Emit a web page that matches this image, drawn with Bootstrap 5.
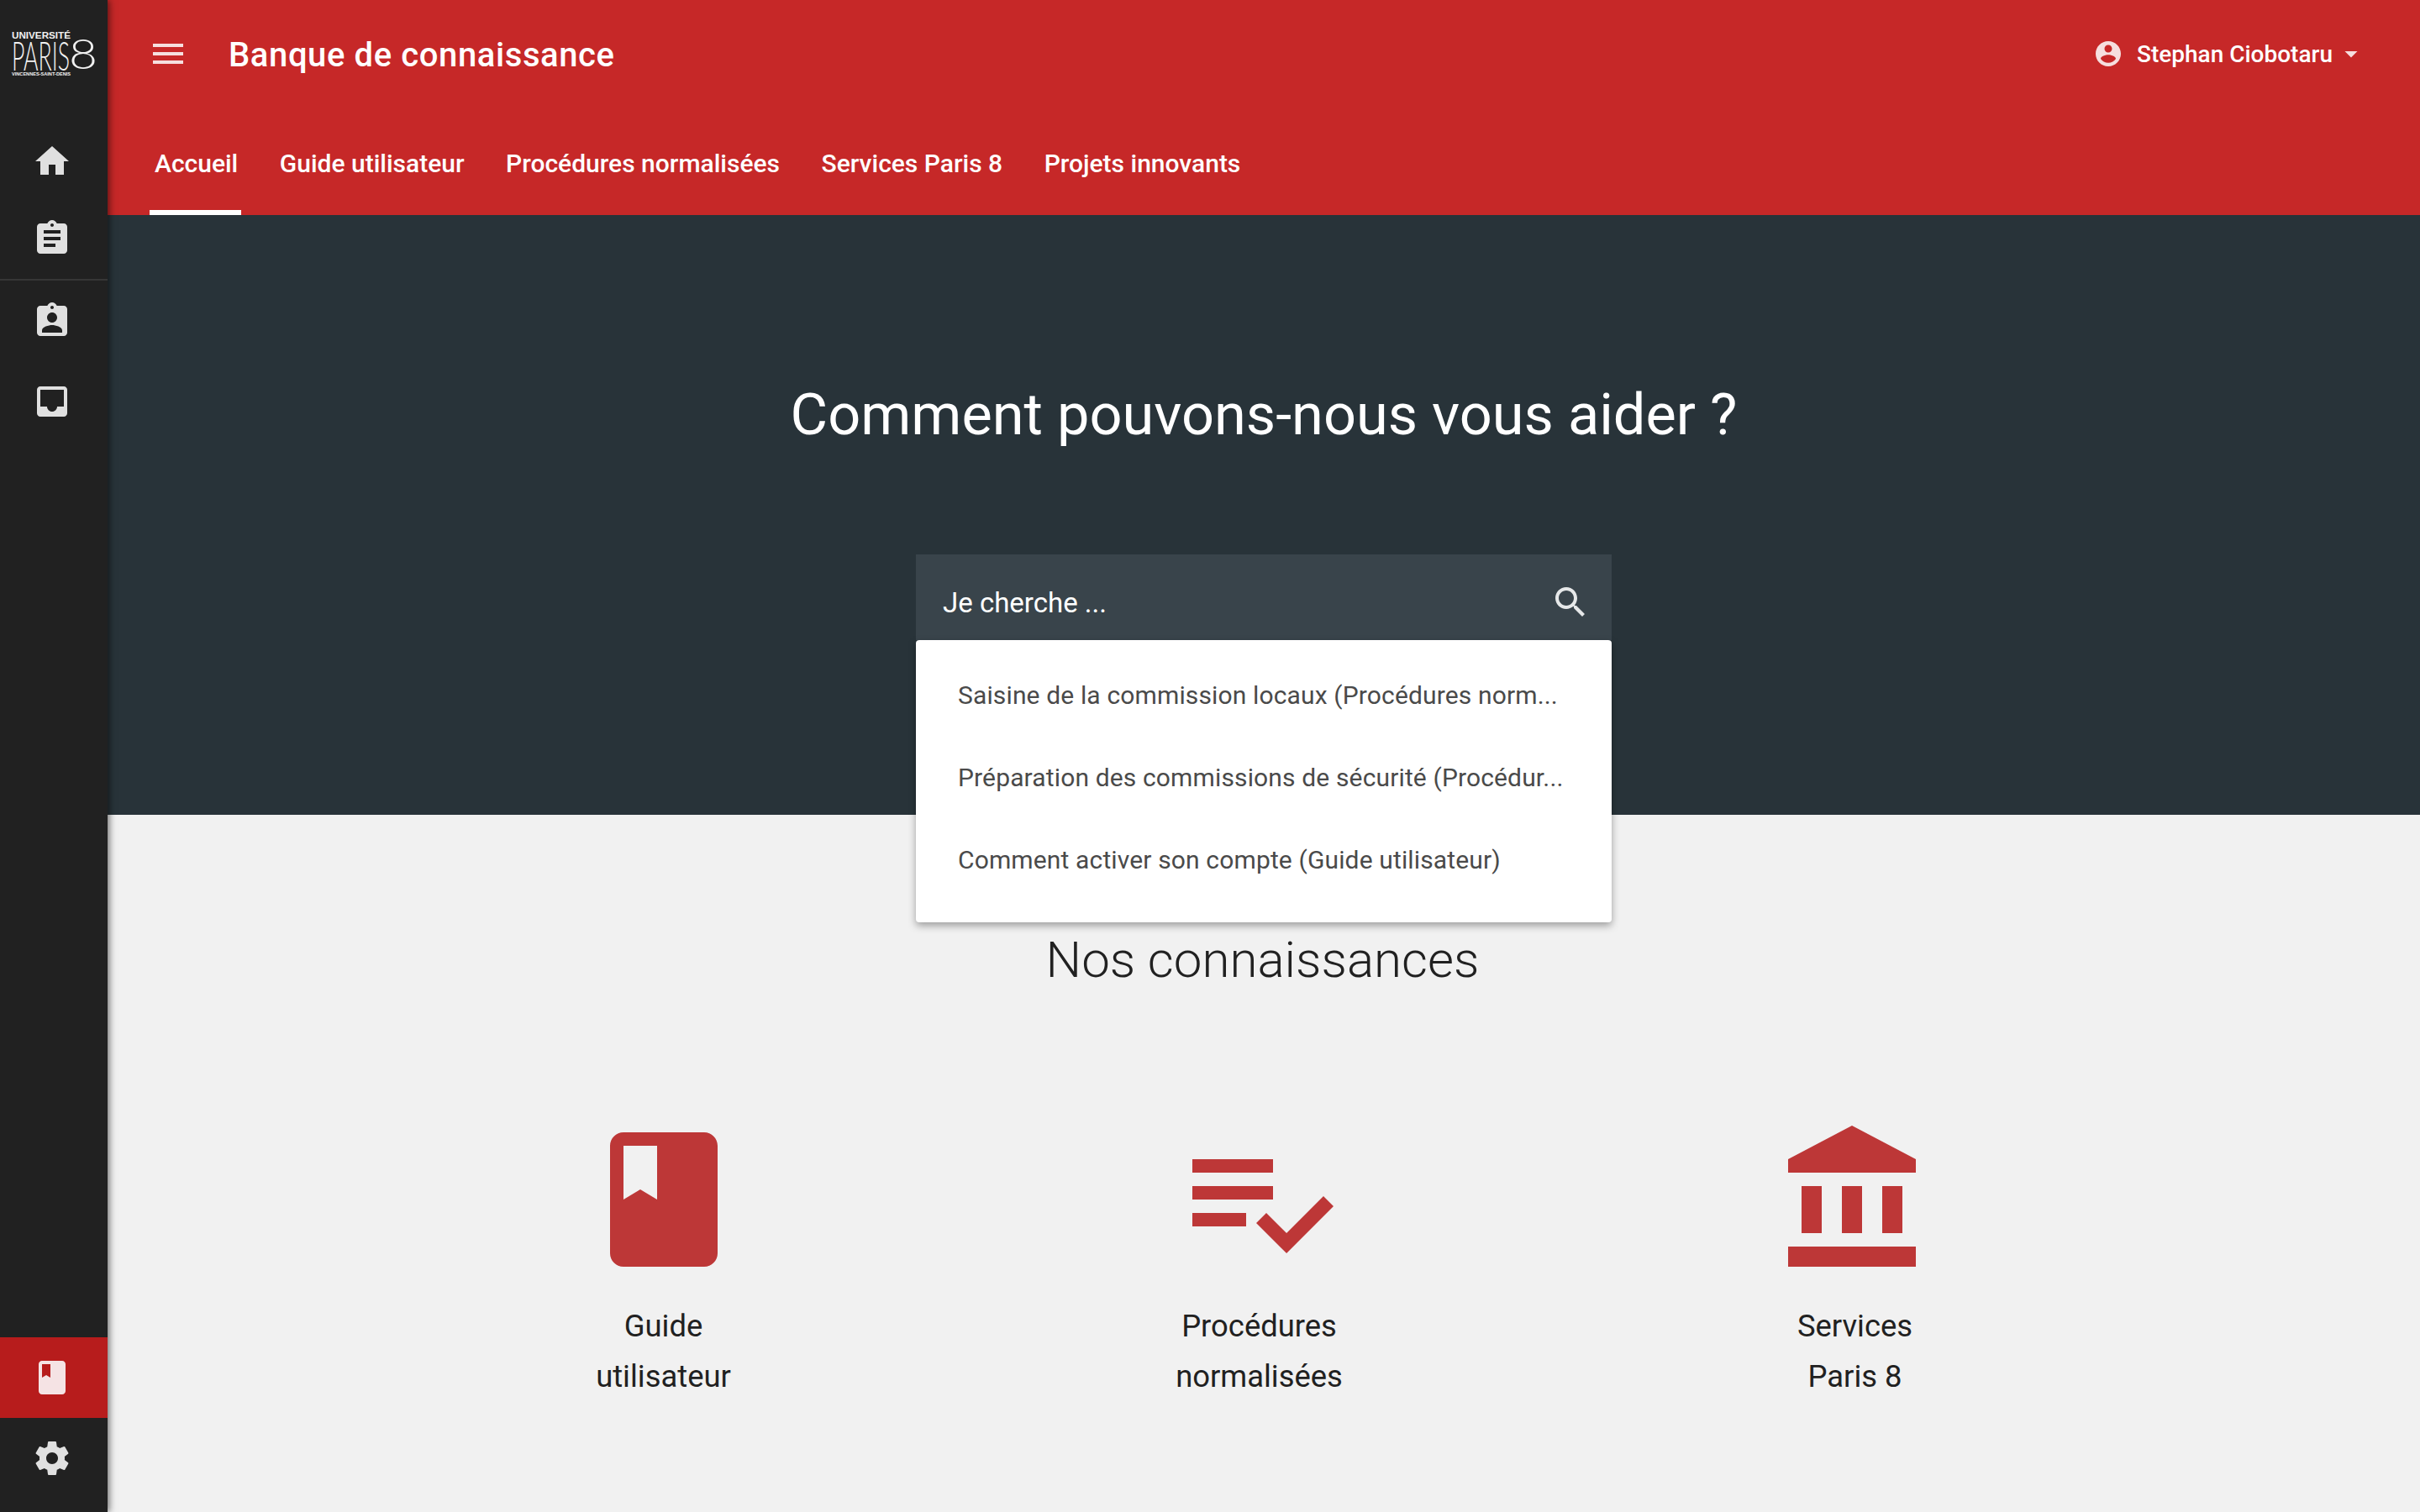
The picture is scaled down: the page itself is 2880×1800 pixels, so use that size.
<!DOCTYPE html>
<html lang="fr">
<head>
<meta charset="utf-8">
<title>Banque de connaissance</title>
<link href="https://cdn.jsdelivr.net/npm/bootstrap@5.3.0/dist/css/bootstrap.min.css" rel="stylesheet">
<style>
html,body{height:100%;}
body{background:#f1f1f1;font-family:Roboto,"Liberation Sans",sans-serif;overflow:hidden;}
.shell{height:1800px;}
.side{width:128px;background:#212121;box-shadow:2px 0 8px rgba(0,0,0,.55);z-index:5;flex:none;}
.logo-zone{height:146px;padding:36px 0 0 14px;}
.logo-zone svg{display:block;overflow:visible;}
.side-item{height:92px;display:flex;align-items:center;justify-content:center;width:124px;}
.side-item svg{width:48px;height:48px;fill:#e0e0e0;}
.side-rule{height:2px;background:#363636;margin:2px 0 2px;}
.side-low{height:96px;width:100%;padding-right:4px;}
.side-on{background:#b71c1c;}
.side-on svg{fill:#f5e3e4;}
.side-last{margin-bottom:16px;}
.main-col{min-width:0;}
.top{background:#c62828;height:256px;color:#fff;position:relative;z-index:3;}
.top-row{height:128px;padding:0 64px 0 48px;}
.burger{width:48px;height:48px;fill:#f6dfdf;display:block;}
.brand-text{font-size:40px;font-weight:500;margin-left:48px;line-height:1;letter-spacing:.6px;color:#fff;padding-top:4px;}
.who{font-size:28px;font-weight:500;color:#fff;}
.who span{padding-top:1px;}
.who svg{fill:#f6dfdf;}
.tabs{padding-left:50px;gap:39.5px;height:128px;}
.tabs .nav-link{color:#fff;font-size:30px;font-weight:500;padding:0 4px 0 6px;height:128px;line-height:134px;border-bottom:6px solid transparent;}
.tabs .nav-link.active{border-bottom-color:#fff;}
.hero{background:#283339;height:714px;padding-top:196px;color:#fff;}
.hero-title{font-size:68.5px;font-weight:400;line-height:84px;margin:0 0 124px;}
.search-wrap{width:828px;position:relative;}
.search-bar{height:102px;background:#39444b;padding:12px 25px 0 32px;color:#fff;font-size:33px;}
.search-bar span{padding-top:2px;}
.search-bar svg{width:48px;height:48px;fill:#e6e8e9;}
.sugg{position:absolute;left:0;right:0;top:102px;background:#fff;border-radius:4px;padding:16px 0;height:336px;box-shadow:0 4px 10px rgba(0,0,0,.35);z-index:4;}
.sugg-row{height:98px;padding:0 0 0 50px;color:#4a4a4a;font-size:30px;letter-spacing:.14px;display:flex;align-items:center;white-space:nowrap;}
.lower{padding-top:137px;}
.know-title{font-size:60px;font-weight:300;line-height:72px;color:#212121;margin:0 0 153px;padding-right:3px;}
.know-row{width:2127px;margin-left:307px;}
.know-cell{width:709px;}
.know-cell svg{width:192px;height:192px;fill:#bd3737;display:block;margin:0 auto 25px;}
.know-label{font-size:36.4px;line-height:60px;color:#212121;text-align:center;}
</style>
</head>
<body>
<div class="shell d-flex">
  <aside class="side d-flex flex-column">
    <div class="logo-zone">
      <svg width="102" height="56" viewBox="0 0 102 56" fill="#f2f2f2" aria-label="Université Paris 8">
        <text x="0" y="10" font-family="Liberation Sans" font-weight="700" font-size="11.5" textLength="70" lengthAdjust="spacingAndGlyphs">UNIVERSITÉ</text>
        <text x="0" y="48" font-family="Lato" font-weight="300" font-size="47" textLength="69" lengthAdjust="spacingAndGlyphs">PARIS</text>
        <text x="68" y="46" font-family="Lato" font-weight="300" font-size="49" textLength="34" lengthAdjust="spacingAndGlyphs">8</text>
        <text x="0" y="54" font-family="Liberation Sans" font-weight="700" font-size="5" textLength="70" lengthAdjust="spacingAndGlyphs">VINCENNES-SAINT-DENIS</text>
      </svg>
    </div>
    <div class="side-item"><svg viewBox="0 0 24 24"><path d="M10 20v-6h4v6h5v-8h3L12 3 2 12h3v8z"/></svg></div>
    <div class="side-item"><svg viewBox="0 0 24 24"><path d="M19 3h-4.18C14.4 1.84 13.3 1 12 1c-1.3 0-2.4.84-2.82 2H5c-1.1 0-2 .9-2 2v14c0 1.1.9 2 2 2h14c1.1 0 2-.9 2-2V5c0-1.1-.9-2-2-2zm-7 0c.55 0 1 .45 1 1s-.45 1-1 1-1-.45-1-1 .45-1 1-1zm2 14H7v-2h7v2zm3-4H7v-2h10v2zm0-4H7V7h10v2z"/></svg></div>
    <div class="side-rule"></div>
    <div class="side-item"><svg viewBox="0 0 24 24"><path d="M19 3h-4.18C14.4 1.84 13.3 1 12 1c-1.3 0-2.4.84-2.82 2H5c-1.1 0-2 .9-2 2v14c0 1.1.9 2 2 2h14c1.1 0 2-.9 2-2V5c0-1.1-.9-2-2-2zm-7 0c.55 0 1 .45 1 1s-.45 1-1 1-1-.45-1-1 .45-1 1-1zm0 4c1.66 0 3 1.34 3 3s-1.34 3-3 3-3-1.34-3-3 1.34-3 3-3zm6 12H6v-1.4c0-2 4-3.1 6-3.1s6 1.1 6 3.1V19z"/></svg></div>
    <div class="side-item mt-1"><svg viewBox="0 0 24 24"><path d="M19 3H4.99c-1.11 0-1.98.89-1.98 2L3 19c0 1.1.88 2 1.99 2H19c1.1 0 2-.9 2-2V5c0-1.11-.9-2-2-2zm0 12h-4c0 1.66-1.35 3-3 3s-3-1.34-3-3H4.99V5H19v10z"/></svg></div>
    <div class="side-item side-low side-on mt-auto"><svg viewBox="0 0 24 24"><path d="M18 2H6c-1.1 0-2 .9-2 2v16c0 1.1.9 2 2 2h12c1.1 0 2-.9 2-2V4c0-1.1-.9-2-2-2zM6 4h5v8l-2.5-1.5L6 12V4z"/></svg></div>
    <div class="side-item side-low side-last"><svg viewBox="0 0 24 24"><path d="M19.43 12.98c.04-.32.07-.64.07-.98s-.03-.66-.07-.98l2.11-1.65c.19-.15.24-.42.12-.64l-2-3.46c-.12-.22-.39-.3-.61-.22l-2.49 1c-.52-.4-1.08-.73-1.69-.98l-.38-2.65C14.46 2.18 14.25 2 14 2h-4c-.25 0-.46.18-.49.42l-.38 2.65c-.61.25-1.17.59-1.69.98l-2.49-1c-.23-.09-.49 0-.61.22l-2 3.46c-.13.22-.07.49.12.64l2.11 1.65c-.04.32-.07.65-.07.98s.03.66.07.98l-2.11 1.65c-.19.15-.24.42-.12.64l2 3.46c.12.22.39.3.61.22l2.49-1c.52.4 1.08.73 1.69.98l.38 2.65c.03.24.24.42.49.42h4c.25 0 .46-.18.49-.42l.38-2.65c.61-.25 1.17-.59 1.69-.98l2.49 1c.23.09.49 0 .61-.22l2-3.46c.12-.22.07-.49-.12-.64l-2.11-1.65zM12 15.5c-1.93 0-3.5-1.57-3.5-3.5s1.57-3.5 3.5-3.5 3.5 1.57 3.5 3.5-1.57 3.5-3.5 3.5z"/></svg></div>
  </aside>
  <div class="main-col flex-grow-1 d-flex flex-column">
    <header class="top">
      <div class="top-row d-flex align-items-center">
        <svg class="burger" viewBox="0 0 24 24"><path d="M3 18h18v-2H3v2zm0-5h18v-2H3v2zm0-7v2h18V6H3z"/></svg>
        <span class="brand-text">Banque de connaissance</span>
        <div class="who ms-auto d-flex align-items-center">
          <svg width="36" height="36" viewBox="0 0 24 24" class="me-3"><path d="M12 2C6.48 2 2 6.48 2 12s4.48 10 10 10 10-4.48 10-10S17.52 2 12 2zm0 3c1.66 0 3 1.34 3 3s-1.34 3-3 3-3-1.34-3-3 1.34-3 3-3zm0 14.2c-2.5 0-4.71-1.28-6-3.22.03-1.99 4-3.08 6-3.08 1.99 0 5.97 1.09 6 3.08-1.29 1.94-3.5 3.22-6 3.22z"/></svg>
          <span>Stephan Ciobotaru</span>
          <svg width="36" height="36" viewBox="0 0 24 24" class="ms-1"><path d="M7 10l5 5 5-5z"/></svg>
        </div>
      </div>
      <nav class="nav tabs">
        <a class="nav-link active" href="#">Accueil</a>
        <a class="nav-link" href="#">Guide utilisateur</a>
        <a class="nav-link" href="#">Procédures normalisées</a>
        <a class="nav-link" href="#">Services Paris 8</a>
        <a class="nav-link" href="#">Projets innovants</a>
      </nav>
    </header>
    <section class="hero d-flex flex-column align-items-center">
      <h1 class="hero-title">Comment pouvons-nous vous aider ?</h1>
      <div class="search-wrap">
        <div class="search-bar d-flex align-items-center justify-content-between">
          <span>Je cherche ...</span>
          <svg viewBox="0 0 24 24"><path d="M15.5 14h-.79l-.28-.27C15.41 12.59 16 11.11 16 9.5 16 5.91 13.09 3 9.5 3S3 5.91 3 9.5 5.91 16 9.5 16c1.61 0 3.09-.59 4.23-1.57l.27.28v.79l5 4.99L20.49 19l-4.99-5zm-6 0C7.01 14 5 11.99 5 9.5S7.01 5 9.5 5 14 7.01 14 9.5 11.99 14 9.5 14z"/></svg>
        </div>
        <div class="sugg">
          <div class="sugg-row">Saisine de la commission locaux (Procédures norm...</div>
          <div class="sugg-row">Préparation des commissions de sécurité (Procédur...</div>
          <div class="sugg-row">Comment activer son compte (Guide utilisateur)</div>
        </div>
      </div>
    </section>
    <section class="lower text-center">
      <h2 class="know-title">Nos connaissances</h2>
      <div class="know-row d-flex">
        <div class="know-cell">
          <svg viewBox="0 0 24 24"><path d="M18 2H6c-1.1 0-2 .9-2 2v16c0 1.1.9 2 2 2h12c1.1 0 2-.9 2-2V4c0-1.1-.9-2-2-2zM6 4h5v8l-2.5-1.5L6 12V4z"/></svg>
          <div class="know-label">Guide<br>utilisateur</div>
        </div>
        <div class="know-cell">
          <svg viewBox="0 0 24 24"><path d="M14 10H2v2h12v-2zm0-4H2v2h12V6zM2 16h8v-2H2v2zm19.5-4.5L23 13l-6.99 7-4.51-4.5L13 14l3.01 3 5.49-5.5z"/></svg>
          <div class="know-label">Procédures<br>normalisées</div>
        </div>
        <div class="know-cell">
          <svg viewBox="0 0 24 24"><path d="M4 10v7h3v-7H4zm6 0v7h3v-7h-3zM2 22h19v-3H2v3zm14-12v7h3v-7h-3zm-4.5-9L2 6v2h19V6l-9.5-5z"/></svg>
          <div class="know-label">Services<br>Paris 8</div>
        </div>
      </div>
    </section>
  </div>
</div>
<script src="https://cdn.jsdelivr.net/npm/bootstrap@5.3.0/dist/js/bootstrap.bundle.min.js"></script>
</body>
</html>
